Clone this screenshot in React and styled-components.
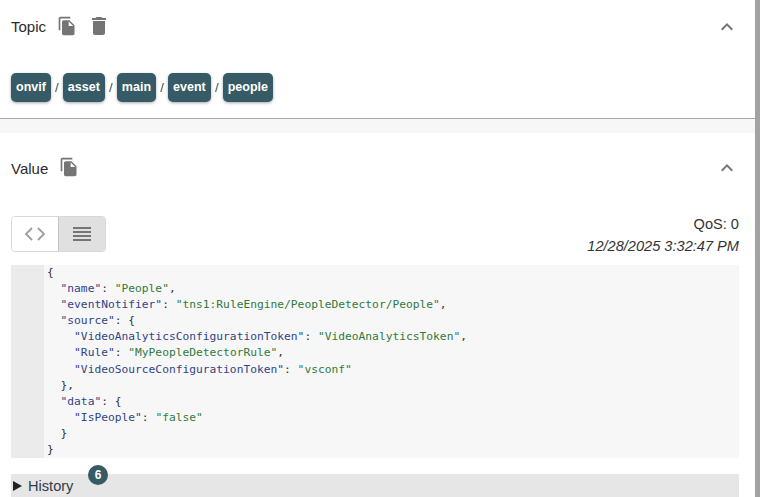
import { Fragment } from "react";
import styled, { createGlobalStyle } from "styled-components";

const Global = createGlobalStyle`
  html, body {
    margin: 0;
    padding: 0;
    height: 100%;
    overflow: hidden;
    background: #fff;
    font-family: "Liberation Sans", Arial, sans-serif;
  }
`;

const Page = styled.div`
  width: 760px;
  height: 497px;
  overflow: hidden;
  display: flex;
`;

const Content = styled.div`
  width: 755px;
  flex: none;
  display: flex;
  flex-direction: column;
`;

const Edge = styled.div`
  width: 5px;
  background: #a3a3a3;
`;

const Section = styled.section`
  background: #fff;
  padding: 0 16px 0 11px;
  height: ${(props) => props.height}px;
  box-sizing: border-box;
  flex: none;
`;

const TopicSection = styled(Section)`
  border-bottom: 1px solid #a8a8a8;
`;

const Gap = styled.div`
  height: 14px;
  flex: none;
  background: #f7f7f7;
`;

const Header = styled.div`
  display: flex;
  align-items: center;
  height: ${(props) => props.height}px;
`;

const Title = styled.span`
  font-size: 15px;
  line-height: 20px;
  color: #2b2b2b;
  margin-right: 11px;
  margin-top: ${(props) => props.drop || 0}px;
`;

const IconSlot = styled.span`
  display: inline-flex;
  margin-right: ${(props) => props.gap || 0}px;
  margin-top: -3px;
  color: #757575;
`;

const Chevron = styled.span`
  display: inline-flex;
  margin-left: auto;
  color: #757575;
`;

const Crumbs = styled.div`
  display: flex;
  align-items: center;
  margin-top: 19px;
`;

const Chip = styled.span`
  background: #365b66;
  color: #fff;
  font-size: 12.5px;
  font-weight: 700;
  height: 29px;
  line-height: 29px;
  padding: 0 5px;
  border-radius: 5px;
  box-shadow: 0 1px 3px rgba(0, 0, 0, 0.35);
`;

const Slash = styled.span`
  font-size: 13px;
  color: #444;
  width: 12px;
  text-align: center;
`;

const Controls = styled.div`
  display: flex;
  justify-content: space-between;
  height: 62px;
`;

const Toggle = styled.div`
  display: flex;
  width: 95px;
  height: 36px;
  box-sizing: border-box;
  margin-top: 13px;
  border: 1px solid #d8d8d8;
  border-radius: 4px;
  overflow: hidden;
`;

const ToggleButton = styled.div`
  flex: 1;
  display: flex;
  align-items: center;
  justify-content: center;
  color: ${(props) => (props.active ? "#757575" : "#9e9e9e")};
  background: ${(props) => (props.active ? "#e0e0e0" : "#fff")};
  border-left: ${(props) => (props.active ? "1px solid #c4c4c4" : "none")};
`;

const Meta = styled.div`
  text-align: right;
  font-size: 14.6px;
  line-height: 22px;
  color: #333;
  margin-top: 10px;
`;

const Stamp = styled.div`
  font-style: italic;
`;

const Editor = styled.div`
  display: flex;
  height: 193px;
  background: #f7f7f7;
`;

const Gutter = styled.div`
  width: 33px;
  flex: none;
  background: #ebebeb;
`;

const Code = styled.div`
  padding-left: 3px;
  font-family: "DejaVu Sans Mono", monospace;
  font-size: 11.25px;
  color: #333;
`;

const CodeLine = styled.div`
  height: 16.1px;
  line-height: 16.1px;
  white-space: pre;
`;

const Key = styled.span`
  color: #2f4488;
`;

const Str = styled.span`
  color: #2f7a3c;
`;

const HistoryBar = styled.div`
  position: relative;
  height: 23px;
  margin-top: 16px;
  background: #e6e6e6;
  display: flex;
  align-items: center;
  font-size: 14.6px;
  color: #2f3d4a;
`;

const Arrow = styled.span`
  width: 0;
  height: 0;
  margin: 0 6px 0 2px;
  border-left: 9px solid #222;
  border-top: 5px solid transparent;
  border-bottom: 5px solid transparent;
`;

const Badge = styled.span`
  position: absolute;
  left: 77px;
  top: -9px;
  width: 20px;
  height: 20px;
  border-radius: 50%;
  background: #365b66;
  color: #fff;
  font-size: 12px;
  font-weight: 700;
  line-height: 20px;
  text-align: center;
`;

const CopyIcon = () => (
  <svg width="20" height="20" viewBox="0 0 24 24" fill="currentColor">
    <path d="M16 1H4c-1.1 0-2 .9-2 2v14h2V3h12V1zm-1 4 6 6v10c0 1.1-.9 2-2 2H7.99C6.89 23 6 22.1 6 21l.01-14c0-1.1.89-2 1.99-2h7zm-1 7h5.5L14 6.5V12z" />
  </svg>
);

const TrashIcon = () => (
  <svg width="24" height="24" viewBox="0 0 24 24" fill="currentColor">
    <path d="M6 19c0 1.1.9 2 2 2h8c1.1 0 2-.9 2-2V7H6v12zM19 4h-3.5l-1-1h-5l-1 1H5v2h14V4z" />
  </svg>
);

const ChevronUp = () => (
  <svg width="24" height="24" viewBox="0 0 24 24" fill="currentColor">
    <path d="M7.41 15.41 12 10.83l4.59 4.58L18 14l-6-6-6 6z" />
  </svg>
);

const CodeIcon = () => (
  <svg width="22" height="14" viewBox="0 0 22 14" fill="none" stroke="currentColor" strokeWidth="1.8">
    <path d="M8 1 2 7l6 6M14 1l6 6-6 6" />
  </svg>
);

const ListIcon = () => (
  <svg width="18" height="14" viewBox="0 0 18 14" fill="currentColor">
    <path d="M0 0h18v2H0zM0 4h18v2H0zM0 8h18v2H0zM0 12h18v2H0z" />
  </svg>
);

const crumbs = ["onvif", "asset", "main", "event", "people"];

function App() {
  return (
    <Page>
      <Global />
      <Content>
        <TopicSection height={119}>
          <Header height={54}>
            <Title>Topic</Title>
            <IconSlot gap={10}>
              <CopyIcon />
            </IconSlot>
            <IconSlot>
              <TrashIcon />
            </IconSlot>
            <Chevron>
              <ChevronUp />
            </Chevron>
          </Header>
          <Crumbs>
            {crumbs.map((name, i) => (
              <Fragment key={name}>
                {i > 0 && <Slash>/</Slash>}
                <Chip>{name}</Chip>
              </Fragment>
            ))}
          </Crumbs>
        </TopicSection>
        <Gap />
        <Section height={364}>
          <Header height={70}>
            <Title drop={2}>Value</Title>
            <IconSlot>
              <CopyIcon />
            </IconSlot>
            <Chevron>
              <ChevronUp />
            </Chevron>
          </Header>
          <Controls>
            <Toggle>
              <ToggleButton>
                <CodeIcon />
              </ToggleButton>
              <ToggleButton active>
                <ListIcon />
              </ToggleButton>
            </Toggle>
            <Meta>
              <div>QoS: 0</div>
              <Stamp>12/28/2025 3:32:47 PM</Stamp>
            </Meta>
          </Controls>
          <Editor>
            <Gutter />
            <Code>
              <CodeLine>{"{"}</CodeLine>
              <CodeLine>
                {"  "}
                <Key>"name"</Key>: <Str>"People"</Str>,
              </CodeLine>
              <CodeLine>
                {"  "}
                <Key>"eventNotifier"</Key>: <Str>"tns1:RuleEngine/PeopleDetector/People"</Str>,
              </CodeLine>
              <CodeLine>
                {"  "}
                <Key>"source"</Key>
                {": {"}
              </CodeLine>
              <CodeLine>
                {"    "}
                <Key>"VideoAnalyticsConfigurationToken"</Key>: <Str>"VideoAnalyticsToken"</Str>,
              </CodeLine>
              <CodeLine>
                {"    "}
                <Key>"Rule"</Key>: <Str>"MyPeopleDetectorRule"</Str>,
              </CodeLine>
              <CodeLine>
                {"    "}
                <Key>"VideoSourceConfigurationToken"</Key>: <Str>"vsconf"</Str>
              </CodeLine>
              <CodeLine>{"  },"}</CodeLine>
              <CodeLine>
                {"  "}
                <Key>"data"</Key>
                {": {"}
              </CodeLine>
              <CodeLine>
                {"    "}
                <Key>"IsPeople"</Key>: <Str>"false"</Str>
              </CodeLine>
              <CodeLine>{"  }"}</CodeLine>
              <CodeLine>{"}"}</CodeLine>
            </Code>
          </Editor>
          <HistoryBar>
            <Arrow />
            History
            <Badge>6</Badge>
          </HistoryBar>
        </Section>
      </Content>
      <Edge />
    </Page>
  );
}

export default App;
